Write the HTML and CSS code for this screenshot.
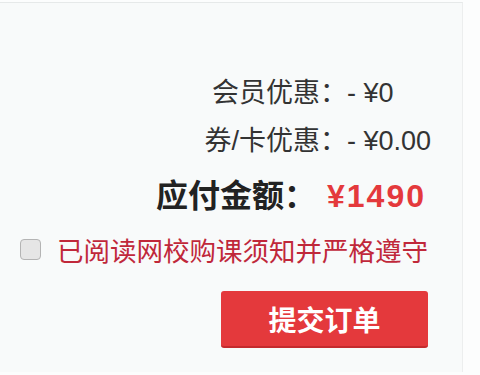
FILE: index.html
```html
<!DOCTYPE html>
<html lang="zh-CN">
<head>
    <meta charset="UTF-8">
    <meta name="viewport" content="width=device-width, initial-scale=1.0">
    <title>提交订单</title>
    <link rel="stylesheet" href="styles.css">
</head>
<body>
    <div class="panel">
        <div class="summary">
            <div class="row">
                <span class="label">会员优惠：</span>
                <span class="value">- ¥0</span>
            </div>
            <div class="row">
                <span class="label">券/卡优惠：</span>
                <span class="value">- ¥0.00</span>
            </div>
            <div class="row total">
                <span class="label">应付金额：</span>
                <span class="value">¥1490</span>
            </div>
        </div>

        <label class="agree">
            <input type="checkbox" class="agree-box">
            <span>已阅读网校购课须知并严格遵守</span>
        </label>

        <div class="actions">
            <button class="submit-button">提交订单</button>
        </div>
    </div>
</body>
</html>
```

FILE: styles.css
```css
body {
    margin: 0;
    background-color: #fcfdfd;
    font-family: "Liberation Sans", "Noto Sans CJK SC", sans-serif;
    color: #333333;
}
.panel {
    width: 463px;
    height: 370px;
    margin-top: 2px;
    padding: 0 34px 0 20px;
    box-sizing: border-box;
    background-color: #f8fafa;
    border-top: 1px solid #e6e9e9;
    border-right: 1px solid #eceeee;
}
.summary {
    padding-top: 66px;
}
.row {
    display: flex;
    font-size: 27px;
    line-height: 48px;
    height: 48px;
    white-space: nowrap;
}
.row .label {
    flex: none;
    width: 327px;
    text-align: right;
}
.row .value {
    flex: none;
}
.total {
    font-size: 32px;
    font-weight: bold;
    line-height: 62px;
    height: 62px;
    color: #222222;
}
.total .label {
    width: 296px;
}
.total .value {
    margin-left: 11px;
    color: #e4393c;
    letter-spacing: 2px;
}
.agree {
    display: flex;
    align-items: center;
    height: 44px;
    font-size: 26.5px;
    color: #c0283a;
}
.agree-box {
    appearance: none;
    width: 21px;
    height: 21px;
    margin: 0 16px 0 0;
    border: 1px solid #b4b4b4;
    border-radius: 4px;
    background-color: #e6e6e6;
    box-sizing: border-box;
}
.actions {
    display: flex;
    justify-content: flex-end;
    margin-top: 20px;
}
.submit-button {
    width: 207px;
    height: 57px;
    border: none;
    border-bottom: 2px solid #c42a2d;
    border-radius: 3px;
    background-color: #e4393c;
    color: #ffffff;
    font-family: "Noto Sans CJK SC", sans-serif;
    font-size: 28px;
    font-weight: bold;
    padding: 0;
    cursor: pointer;
}
```
